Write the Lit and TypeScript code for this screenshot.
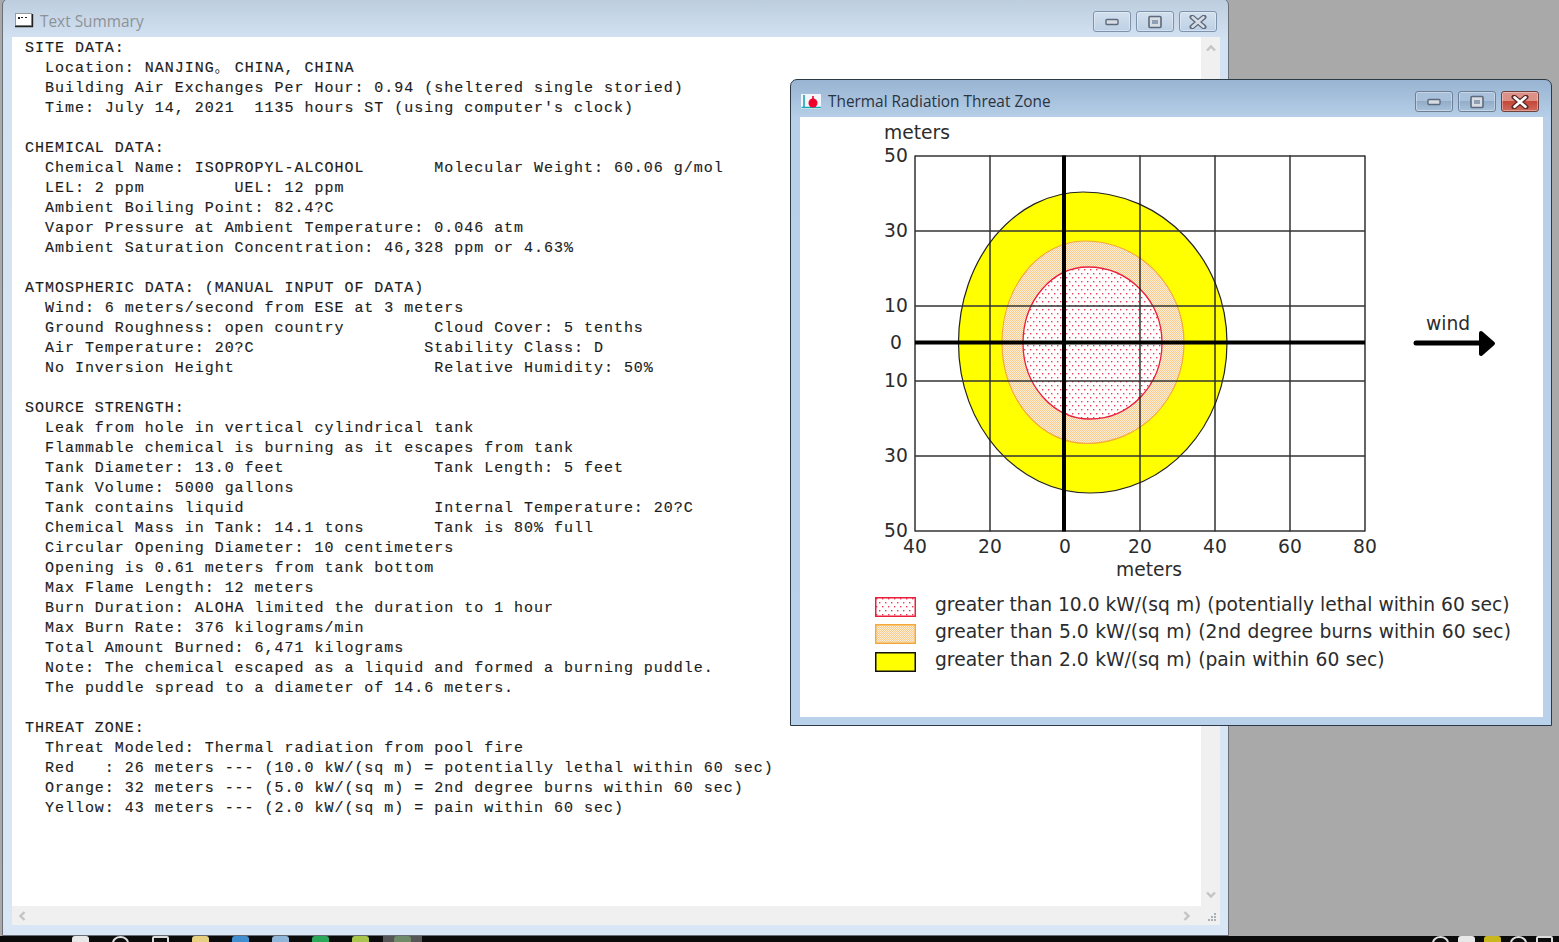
import { LitElement, html, css, svg } from 'lit'
import { customElement, property } from 'lit/decorators.js'

interface Plume {
  top: [number, number]
  bottom: [number, number]
  left: number
  right: number
  y: number
}

const YELLOW: Plume = { top: [1083, 192], bottom: [1090, 493], left: 958.5, right: 1227, y: 343 }
const ORANGE: Plume = { top: [1085, 241], bottom: [1087, 443.5], left: 1002, right: 1184, y: 343 }
const RED: Plume = { top: [1088, 267], bottom: [1090, 419], left: 1023, right: 1162, y: 343 }

// plume outline: four quarter ellipses, each with its own radii
function outline(p: Plume): string {
  const k = 0.5523
  const [tx, ty] = p.top
  const [bx, by] = p.bottom
  return [
    `M${p.left} ${p.y}`,
    `C${p.left} ${p.y - (p.y - ty) * k} ${tx - (tx - p.left) * k} ${ty} ${tx} ${ty}`,
    `C${tx + (p.right - tx) * k} ${ty} ${p.right} ${p.y - (p.y - ty) * k} ${p.right} ${p.y}`,
    `C${p.right} ${p.y + (by - p.y) * k} ${bx + (p.right - bx) * k} ${by} ${bx} ${by}`,
    `C${bx - (bx - p.left) * k} ${by} ${p.left} ${p.y + (by - p.y) * k} ${p.left} ${p.y}Z`,
  ].join('')
}

const GRID_X = [915, 990, 1140, 1215, 1290, 1365]
const GRID_Y = [156, 231, 306, 381, 456, 531]
const Y_LABELS: [string, number, number][] = [['50', 896, 162], ['30', 896, 237], ['10', 896, 312], ['0', 896, 349], ['10', 896, 387], ['30', 896, 462], ['50', 896, 537]]
const X_LABELS: [string, number][] = [['40', 915], ['20', 990], ['0', 1065], ['20', 1140], ['40', 1215], ['60', 1290], ['80', 1365]]

const BEFORE = `SITE DATA:
  Location: NANJING`
const AFTER = ` CHINA, CHINA
  Building Air Exchanges Per Hour: 0.94 (sheltered single storied)
  Time: July 14, 2021  1135 hours ST (using computer's clock)

CHEMICAL DATA:
  Chemical Name: ISOPROPYL-ALCOHOL       Molecular Weight: 60.06 g/mol
  LEL: 2 ppm         UEL: 12 ppm
  Ambient Boiling Point: 82.4?C
  Vapor Pressure at Ambient Temperature: 0.046 atm
  Ambient Saturation Concentration: 46,328 ppm or 4.63%

ATMOSPHERIC DATA: (MANUAL INPUT OF DATA)
  Wind: 6 meters/second from ESE at 3 meters
  Ground Roughness: open country         Cloud Cover: 5 tenths
  Air Temperature: 20?C                 Stability Class: D
  No Inversion Height                    Relative Humidity: 50%

SOURCE STRENGTH:
  Leak from hole in vertical cylindrical tank
  Flammable chemical is burning as it escapes from tank
  Tank Diameter: 13.0 feet               Tank Length: 5 feet
  Tank Volume: 5000 gallons
  Tank contains liquid                   Internal Temperature: 20?C
  Chemical Mass in Tank: 14.1 tons       Tank is 80% full
  Circular Opening Diameter: 10 centimeters
  Opening is 0.61 meters from tank bottom
  Max Flame Length: 12 meters
  Burn Duration: ALOHA limited the duration to 1 hour
  Max Burn Rate: 376 kilograms/min
  Total Amount Burned: 6,471 kilograms
  Note: The chemical escaped as a liquid and formed a burning puddle.
  The puddle spread to a diameter of 14.6 meters.

THREAT ZONE:
  Threat Modeled: Thermal radiation from pool fire
  Red   : 26 meters --- (10.0 kW/(sq m) = potentially lethal within 60 sec)
  Orange: 32 meters --- (5.0 kW/(sq m) = 2nd degree burns within 60 sec)
  Yellow: 43 meters --- (2.0 kW/(sq m) = pain within 60 sec)`

const patterns = svg`
  <pattern id="dots-red" width="6" height="8" patternUnits="userSpaceOnUse">
    <rect x="1" y="1" width="1.4" height="1.4" fill="#ee3b55"></rect>
    <rect x="4" y="5" width="1.4" height="1.4" fill="#ee3b55"></rect>
  </pattern>
  <pattern id="dots-orange" width="2" height="2" patternUnits="userSpaceOnUse">
    <rect width="2" height="2" fill="#fff0dc"></rect>
    <rect x="0" y="0" width="1" height="1" fill="#f8c98c"></rect>
    <rect x="1" y="1" width="1" height="1" fill="#f8c98c"></rect>
  </pattern>
`

@customElement('caption-buttons')
export class CaptionButtons extends LitElement {
  @property({ type: Boolean, reflect: true })
  active = false

  render() {
    return html`
      <div class="btn">
        <svg width="16" height="8" viewBox="0 0 16 8"><rect x="2" y="1.5" width="12" height="5" rx="1" fill="#d8dde4" stroke="#5b6a7c" stroke-width="1.4"></rect></svg>
      </div>
      <div class="btn">
        <svg width="16" height="14" viewBox="0 0 16 14"><rect x="2" y="1.5" width="12" height="11" rx="1" fill="#d8dde4" stroke="#5b6a7c" stroke-width="1.6"></rect><rect x="5" y="5" width="6" height="4" fill="#8fa0b4"></rect></svg>
      </div>
      <div class="btn close">
        <svg width="18" height="14" viewBox="0 0 18 14"><path d="M3 2l12 10M15 2L3 12" stroke="${this.active ? '#5a2a28' : '#5b6a7c'}" stroke-width="5" stroke-linecap="round"></path><path d="M3.5 2.3l11 9.4M14.5 2.3l-11 9.4" stroke="${this.active ? '#fff' : '#d8dde4'}" stroke-width="2.6" stroke-linecap="round"></path></svg>
      </div>
    `
  }

  static styles = css`
    :host {
      display: flex;
      gap: 5px;
    }

    .btn {
      width: 38px;
      height: 21px;
      box-sizing: border-box;
      border: 1px solid #7e93ab;
      border-radius: 3px;
      background: linear-gradient(#d3e0ee, #bdd0e4);
      display: flex;
      align-items: center;
      justify-content: center;
      box-shadow: inset 0 0 0 1px rgba(255, 255, 255, 0.35);
    }

    :host([active]) .btn {
      background: linear-gradient(#a9c1da 0 45%, #93acc8 50%, #a9c2dc 100%);
      border-color: #6d8097;
    }

    :host([active]) .btn.close {
      background: linear-gradient(#dc9086 0 45%, #c5483a 50%, #cf6a5c 100%);
      border-color: #70403c;
    }
  `
}

@customElement('app-root')
export class AppRoot extends LitElement {
  private renderChart() {
    return html`
      <svg class="chart" width="743" height="468" viewBox="800 117 743 468">
        <defs>${patterns}</defs>
        <path d=${outline(YELLOW)} fill="#ffff00" stroke="#222" stroke-width="1.2"></path>
        <path d=${outline(ORANGE)} fill="url(#dots-orange)" stroke="#f4a93c" stroke-width="1.2"></path>
        <path d=${outline(RED)} fill="#fff"></path>
        <path d=${outline(RED)} fill="url(#dots-red)" stroke="#e8203c" stroke-width="1.3"></path>
        ${GRID_X.map(x => svg`<line x1=${x} x2=${x} y1="155.5" y2="531.5" stroke="#111" stroke-width="1.3"></line>`)}
        ${GRID_Y.map(y => svg`<line x1="915" x2="1365" y1=${y} y2=${y} stroke="#333" stroke-width="1.3"></line>`)}
        <line x1="1064" x2="1064" y1="155.5" y2="531.5" stroke="#000" stroke-width="4"></line>
        <line x1="915" x2="1365" y1="342.5" y2="342.5" stroke="#000" stroke-width="4"></line>
        <text class="lbl" x="884" y="139">meters</text>
        ${Y_LABELS.map(([t, x, y]) => svg`<text class="lbl mid" x=${x} y=${y}>${t}</text>`)}
        ${X_LABELS.map(([t, x]) => svg`<text class="lbl mid" x=${x} y="553">${t}</text>`)}
        <text class="lbl mid" x="1149" y="576">meters</text>
        <text class="lbl mid" x="1448" y="330">wind</text>
        <path d="M1416 343H1482" stroke="#000" stroke-width="5" stroke-linecap="round"></path>
        <path d="M1481 333L1493 343.5L1481 354Z" fill="#000" stroke="#000" stroke-width="4" stroke-linejoin="round"></path>
      </svg>
    `
  }

  render() {
    return html`
      <div class="desktop">
        <section class="window summary">
          <header class="titlebar">
            <svg class="app-icon" width="19" height="15" viewBox="0 0 19 15">
              <rect x="0.5" y="0.5" width="16" height="12" fill="#fff" stroke="#999"></rect>
              <path d="M3 4h2v2H3zM6 4h2v1H6zM10 4h2v1h-2z" fill="#222"></path>
              <path d="M0 13.5h18M17.5 1v13" stroke="#222" stroke-width="1.4"></path>
            </svg>
            <span class="title inactive">Text Summary</span>
            <caption-buttons></caption-buttons>
          </header>
          <div class="client">
            <div class="upper">
              <pre class="report">${BEFORE}<span class="ideo">。</span>${AFTER}</pre>
              <div class="vscroll">
                <svg width="12" height="8" viewBox="0 0 12 8"><path d="M2 6.5L6 2.5L10 6.5" fill="none" stroke="#c4c4c4" stroke-width="2.4"></path></svg>
                <svg width="12" height="8" viewBox="0 0 12 8"><path d="M2 1.5L6 5.5L10 1.5" fill="none" stroke="#c4c4c4" stroke-width="2.4"></path></svg>
              </div>
            </div>
            <div class="hscroll">
              <svg width="8" height="12" viewBox="0 0 8 12"><path d="M6.5 2L2.5 6L6.5 10" fill="none" stroke="#c4c4c4" stroke-width="2.4"></path></svg>
              <svg width="8" height="12" viewBox="0 0 8 12"><path d="M1.5 2L5.5 6L1.5 10" fill="none" stroke="#c4c4c4" stroke-width="2.4"></path></svg>
              <svg class="grip" width="12" height="12" viewBox="0 0 12 12"><path d="M8 2h2v2H8zM5 5h2v2H5zM8 5h2v2H8zM2 8h2v2H2zM5 8h2v2H5zM8 8h2v2H8z" fill="#aab0b6"></path></svg>
            </div>
          </div>
        </section>

        <section class="window threat">
          <header class="titlebar">
            <svg width="21" height="16" viewBox="0 0 21 16">
              <rect width="20" height="15" fill="#f4f6fa"></rect>
              <path d="M3 1v12M0.5 13.5H20" stroke="#19a7b5" stroke-width="1.6"></path>
              <circle cx="12" cy="9" r="4.5" fill="#f0002a"></circle>
              <path d="M12 2v6" stroke="#f0002a" stroke-width="1.6"></path>
            </svg>
            <span class="title">Thermal Radiation Threat Zone</span>
            <caption-buttons active></caption-buttons>
          </header>
          <div class="plot">
            ${this.renderChart()}
            <div class="legend">
              <div class="row">
                <svg class="swatch" width="41" height="20" viewBox="0 0 41 20"><rect x="0.75" y="0.75" width="39.5" height="18.5" fill="url(#dots-red)" stroke="#e8203c" stroke-width="1.5"></rect></svg>
                <span>greater than 10.0 kW/(sq m) (potentially lethal within 60 sec)</span>
              </div>
              <div class="row wide">
                <svg class="swatch" width="41" height="20" viewBox="0 0 41 20"><rect x="0.75" y="0.75" width="39.5" height="18.5" fill="url(#dots-orange)" stroke="#f4a93c" stroke-width="1.5"></rect></svg>
                <span>greater than 5.0 kW/(sq m) (2nd degree burns within 60 sec)</span>
              </div>
              <div class="row wide">
                <svg class="swatch" width="41" height="20" viewBox="0 0 41 20"><rect x="0.75" y="0.75" width="39.5" height="18.5" fill="#ffff00" stroke="#111" stroke-width="1.5"></rect></svg>
                <span>greater than 2.0 kW/(sq m) (pain within 60 sec)</span>
              </div>
            </div>
          </div>
        </section>

        <footer class="taskbar">
          <div class="tray-left">
            <i style="background:#e8e8e8"></i>
            <i class="ring"></i>
            <i class="ring box"></i>
            <i style="background:#e6cf7e"></i>
            <i style="background:#3f8fd0"></i>
            <i style="background:#8fb6d8"></i>
            <i style="background:#2aa85a"></i>
            <i style="background:#a9c44a"></i>
            <b><i style="background:#6f8a66"></i></b>
          </div>
          <div class="tray-right">
            <i class="ring"></i>
            <i style="background:#e8e8e8"></i>
            <i style="background:#c8b81e"></i>
            <i class="ring"></i>
            <i class="ring box"></i>
          </div>
        </footer>
      </div>
    `
  }

  static styles = css`
    :host {
      display: block;
    }

    .desktop {
      position: relative;
      width: 1559px;
      height: 942px;
      overflow: hidden;
      background: #a9a9a9;
      font-family: "Open Sans", "Noto Sans", sans-serif;
    }

    .window {
      position: absolute;
      box-sizing: border-box;
      display: flex;
      flex-direction: column;
    }

    .summary {
      left: 2px;
      top: -2px;
      width: 1227px;
      height: 938px;
      padding: 0 8px 10px 9px;
      border: 1px solid #6a6f75;
      border-radius: 7px 7px 0 0;
      background: linear-gradient(#bccdde, #d3e2f2 40px, #d9e6f5);
    }

    .threat {
      left: 790px;
      top: 79px;
      width: 762px;
      height: 647px;
      padding: 0 8px 8px 9px;
      border: 1px solid #2b3a44;
      border-radius: 7px 7px 0 0;
      background: linear-gradient(#98b4d2, #b7cfe8 38px, #b9d1ea);
    }

    .titlebar {
      flex: none;
      box-sizing: border-box;
      display: flex;
      align-items: center;
      gap: 6px;
    }

    .summary .titlebar {
      height: 38px;
      padding: 7px 3px 0 3px;
    }

    .threat .titlebar {
      height: 37px;
      padding: 6px 4px 0 1px;
    }

    .app-icon {
      margin-top: -3px;
    }

    .title {
      flex: 1;
      font-size: 15.4px;
      color: #2a3440;
      white-space: nowrap;
    }

    .title.inactive {
      color: #8d9298;
    }

    .client {
      flex: 1;
      min-height: 0;
      display: flex;
      flex-direction: column;
    }

    .upper {
      flex: 1;
      min-height: 0;
      display: flex;
    }

    .report {
      flex: 1;
      margin: 0;
      padding: 2px 0 0 13px;
      background: #fff;
      font-family: "Liberation Mono", monospace;
      font-size: 15px;
      letter-spacing: 0.98px;
      line-height: 20px;
      color: #1c1c1c;
      -webkit-text-stroke: 0.15px #1c1c1c;
      overflow: hidden;
    }

    .ideo {
      line-height: 0;
      font-size: 13px;
      letter-spacing: -3px;
      -webkit-text-stroke: 0;
      font-family: "Noto Sans CJK SC", sans-serif;
    }

    .vscroll {
      flex: none;
      width: 19px;
      background: #f0f0f0;
      display: flex;
      flex-direction: column;
      justify-content: space-between;
      align-items: center;
      padding: 7px 0;
      box-sizing: border-box;
    }

    .hscroll {
      flex: none;
      height: 19px;
      background: #f0f0f0;
      display: flex;
      align-items: center;
      padding: 0 0 0 6px;
      position: relative;
    }

    .hscroll svg:nth-child(2) {
      margin-left: auto;
      margin-right: 29px;
    }

    .hscroll .grip {
      position: absolute;
      right: 2px;
      bottom: 2px;
    }

    .plot {
      flex: 1;
      min-height: 0;
      background: #fff;
      display: flex;
      flex-direction: column;
    }

    .chart {
      display: block;
      flex: none;
    }

    .lbl {
      font-family: "DejaVu Sans", sans-serif;
      font-size: 18.7px;
      fill: #2c2c2c;
    }

    .mid {
      text-anchor: middle;
    }

    .legend {
      display: flex;
      flex-direction: column;
      gap: 7.5px;
      padding: 9px 0 0 75px;
      font-family: "DejaVu Sans", sans-serif;
      font-size: 18.7px;
      color: #2c2c2c;
    }

    .row {
      display: flex;
      align-items: center;
      gap: 19px;
      height: 20px;
      white-space: nowrap;
    }

    .row.wide {
      word-spacing: 0.55px;
    }

    .swatch {
      flex: none;
      margin-top: 5px;
    }

    .taskbar {
      position: absolute;
      left: 0;
      right: 0;
      bottom: 0;
      height: 6px;
      background: #0b0b0b;
      overflow: hidden;
      display: flex;
      justify-content: space-between;
    }

    .tray-left {
      display: flex;
      gap: 23px;
      padding-left: 72px;
    }

    .tray-left i,
    .tray-right i {
      display: block;
      width: 17px;
      height: 14px;
      border-radius: 3px 3px 0 0;
    }

    .tray-left b {
      width: 39px;
      height: 6px;
      margin-left: -9px;
      background: #555;
      display: flex;
      justify-content: center;
    }

    .ring {
      box-sizing: border-box;
      border: 2px solid #ddd;
      border-radius: 50% !important;
    }

    .ring.box {
      border-radius: 2px !important;
    }

    .tray-right {
      display: flex;
      gap: 9px;
      padding-right: 6px;
    }
  `
}

declare global {
  interface HTMLElementTagNameMap {
    'app-root': AppRoot
    'caption-buttons': CaptionButtons
  }
}
